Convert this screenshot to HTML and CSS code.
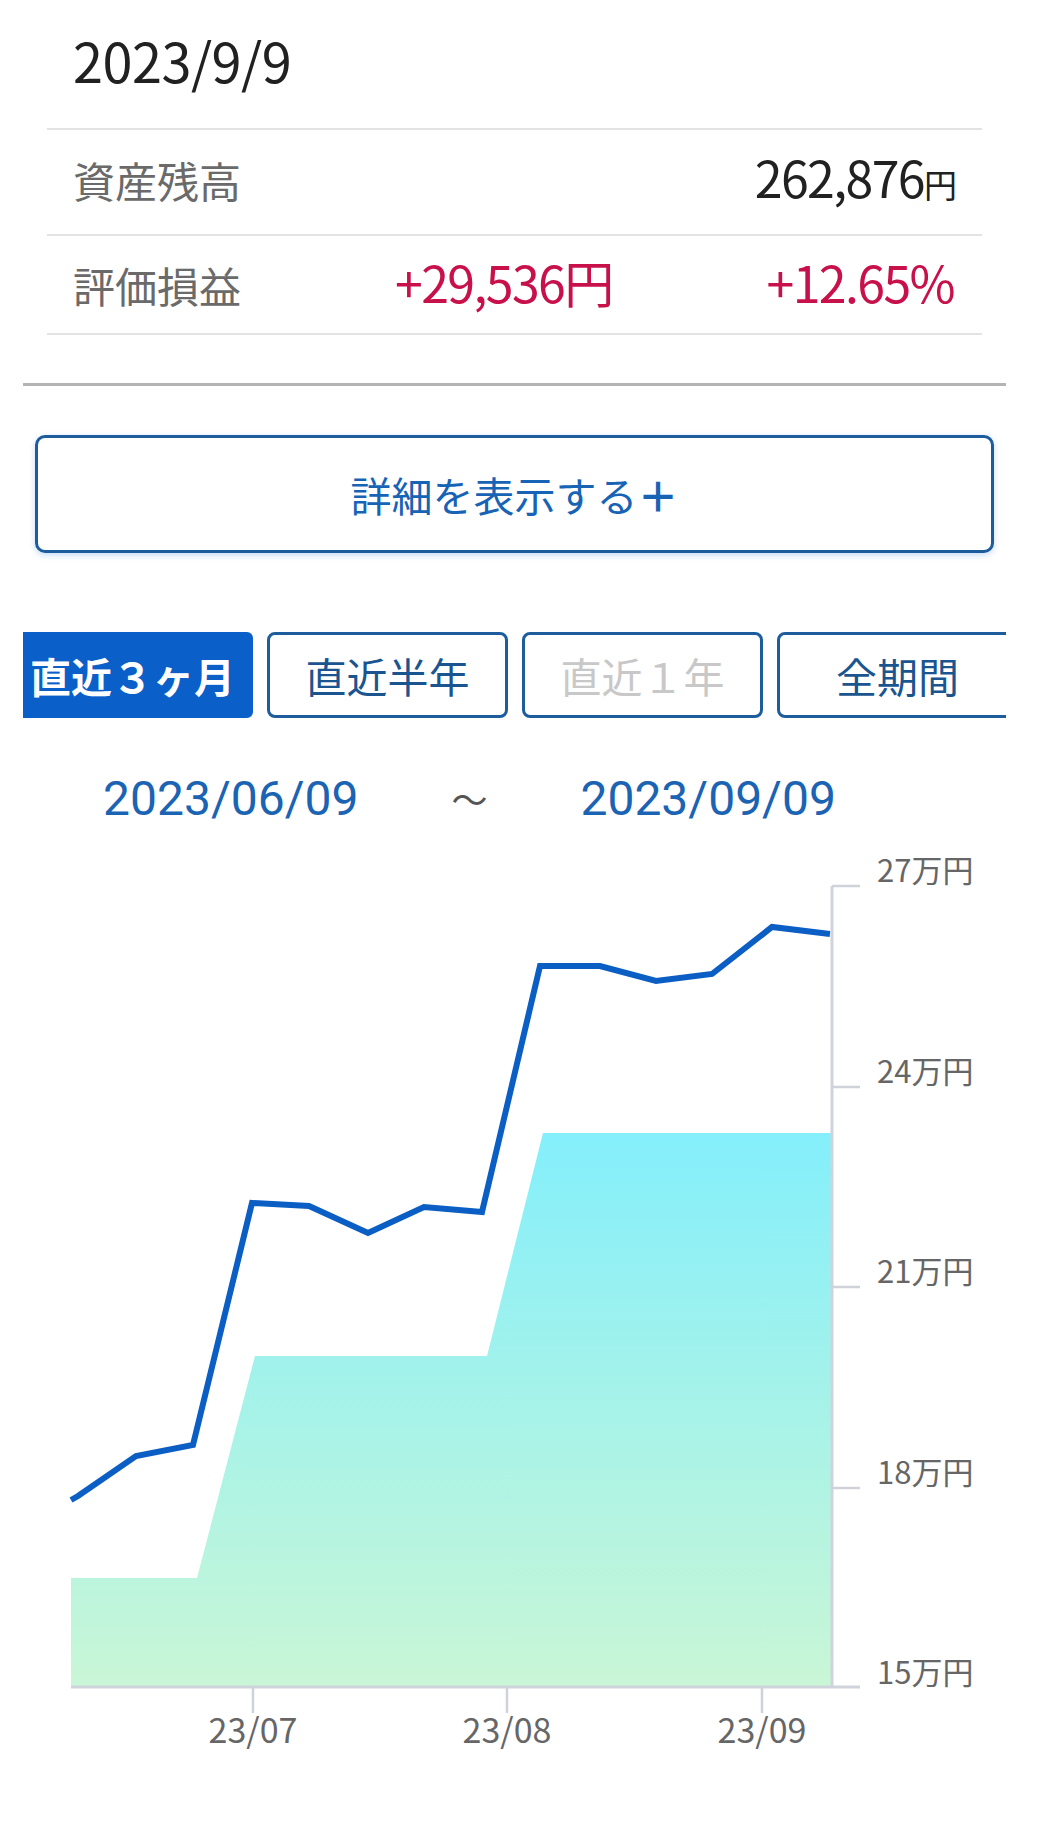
FILE: index.html
```html
<!DOCTYPE html>
<html lang="ja">
<head>
    <meta charset="UTF-8">
    <meta name="viewport" content="width=device-width, initial-scale=1.0">
    <title>資産推移</title>
    <link rel="stylesheet" href="styles.css">
</head>
<body>
    <div class="summary">
        <div class="summary-date">2023/9/9</div>
        <div class="summary-row balance">
            <span class="summary-label">資産残高</span>
            <span class="summary-value">262,876<span class="yen">円</span></span>
        </div>
        <div class="summary-row profit">
            <span class="summary-label">評価損益</span>
            <span class="summary-value plus">+29,536円</span>
            <span class="summary-value plus rate">+12.65%</span>
        </div>
    </div>
    <div class="divider"></div>

    <button class="detail-button">詳細を表示する<span class="detail-plus">＋</span></button>

    <div class="period-tabs">
        <div class="tabs-track">
            <button class="tab active">直近３ヶ月</button>
            <button class="tab">直近半年</button>
            <button class="tab disabled">直近１年</button>
            <button class="tab">全期間</button>
        </div>
    </div>

    <div class="range">
        <span class="range-date">2023/06/09</span>
        <span class="range-sep">〜</span>
        <span class="range-date">2023/09/09</span>
    </div>

    <div class="chart">
        <svg width="1039" height="920" viewBox="0 840 1039 920">
            <defs>
                <linearGradient id="principal" gradientUnits="userSpaceOnUse" x1="0" y1="1133" x2="0" y2="1687">
                    <stop offset="0" stop-color="#84effb"/>
                    <stop offset="1" stop-color="#c9f6d6"/>
                </linearGradient>
            </defs>
            <path d="M71 1687 L71 1578 L197 1578 L255 1356 L487 1356 L543 1133 L832 1133 L832 1687 Z" fill="url(#principal)"/>
            <polyline class="asset-line" points="71,1500 78,1496 136,1456 193,1445 252,1203 309,1206 368,1233 424,1207 482,1212 540,966 600,966 656,981 712,974 772,927 830,934"/>

            <line class="axis" x1="832" y1="886" x2="832" y2="1687"/>
            <line class="axis" x1="71" y1="1687" x2="860" y2="1687"/>
            <line class="tick" x1="832" y1="886" x2="860" y2="886"/>
            <line class="tick" x1="832" y1="1087" x2="860" y2="1087"/>
            <line class="tick" x1="832" y1="1287" x2="860" y2="1287"/>
            <line class="tick" x1="832" y1="1488" x2="860" y2="1488"/>
            <line class="tick" x1="253" y1="1687" x2="253" y2="1713"/>
            <line class="tick" x1="507" y1="1687" x2="507" y2="1713"/>
            <line class="tick" x1="762" y1="1687" x2="762" y2="1713"/>

            <text class="y-label" x="877" y="882">27万円</text>
            <text class="y-label" x="877" y="1083">24万円</text>
            <text class="y-label" x="877" y="1283">21万円</text>
            <text class="y-label" x="877" y="1484">18万円</text>
            <text class="y-label" x="877" y="1684">15万円</text>

            <text class="x-label" x="253" y="1743">23/07</text>
            <text class="x-label" x="507" y="1743">23/08</text>
            <text class="x-label" x="762" y="1743">23/09</text>
        </svg>
    </div>
</body>
</html>
```

FILE: styles.css
```css
:root {
    --text-main: #212121;
    --text-sub: #6a6a6a;
    --plus-color: #c8104b;
    --blue-dark: #1d5d9e;
    --blue-text: #1763b5;
    --blue-active: #0a5fc9;
    --line-color: #e3e3e3;
}

body {
    margin: 0;
    background-color: #fff;
    color: var(--text-main);
    font-family: "Noto Sans CJK JP", sans-serif;
    width: 1039px;
    min-height: 1844px;
}

.summary {
    margin: 0 57px 0 47px;
}
.summary-date {
    padding: 21px 0 29px 26px;
    font-size: 54px;
    line-height: 78px;
    letter-spacing: -0.5px;
}
.summary-row {
    display: flex;
    align-items: baseline;
    box-sizing: border-box;
    padding: 0 25px 0 26px;
    border-top: 2px solid var(--line-color);
}
.summary-row.balance {
    height: 106px;
    padding-top: 10px;
    justify-content: space-between;
}
.summary-row.profit {
    display: grid;
    grid-template-columns: 322px auto 1fr;
    height: 101px;
    padding-top: 9px;
    border-bottom: 2px solid var(--line-color);
}
.summary-label {
    font-size: 42px;
    color: var(--text-sub);
}
.summary-value {
    font-size: 50px;
    letter-spacing: -1.6px;
}
.summary-value .yen {
    font-size: 33px;
    letter-spacing: 0;
}
.summary-value.plus {
    color: var(--plus-color);
}
.summary-value.rate {
    text-align: right;
    margin-right: 3px;
}
.divider {
    margin: 48px 33px 0 23px;
    height: 3px;
    background-color: #b4b4b4;
}

.detail-button {
    display: block;
    box-sizing: border-box;
    width: 959px;
    height: 118px;
    margin: 49px 0 0 35px;
    padding: 0;
    background-color: #fff;
    border: 3px solid var(--blue-dark);
    border-radius: 10px;
    box-shadow: 0 2px 6px rgba(20, 110, 220, 0.25);
    color: var(--blue-text);
    font-family: "Noto Sans CJK JP", sans-serif;
    font-size: 41px;
}
.detail-plus {
    font-weight: bold;
}

.period-tabs {
    width: 983px;
    margin: 79px 0 0 23px;
    overflow: hidden;
}
.tabs-track {
    display: flex;
    gap: 14px;
    margin-left: -11px;
}
.tab {
    flex: 0 0 241px;
    box-sizing: border-box;
    height: 86px;
    padding: 0;
    background-color: #fff;
    border: 3px solid var(--blue-dark);
    border-radius: 8px;
    color: #1a5590;
    font-family: "Noto Sans CJK JP", sans-serif;
    font-size: 41px;
    white-space: nowrap;
}
.tab.active {
    background-color: var(--blue-active);
    border-color: var(--blue-active);
    border-radius: 6px;
    color: #fff;
    font-weight: bold;
}
.tab.disabled {
    color: #c8c8c8;
}

.range {
    display: flex;
    align-items: center;
    gap: 93px;
    margin-top: 53px;
    padding-left: 103px;
    height: 54px;
}
.range-date {
    font-family: Roboto, sans-serif;
    font-size: 48px;
    color: #1b63b3;
}
.range-sep {
    font-size: 36px;
    color: #555;
}

.chart {
    margin-top: 15px;
}
.chart svg {
    display: block;
}
.asset-line {
    fill: none;
    stroke: #0b5ec3;
    stroke-width: 6;
    stroke-linejoin: miter;
}
.axis {
    stroke: #cfd4dc;
    stroke-width: 3;
}
.tick {
    stroke: #cfd2d8;
    stroke-width: 2.5;
}
.y-label {
    font-family: "Noto Sans CJK JP", sans-serif;
    font-size: 31px;
    fill: #666;
}
.x-label {
    font-family: "Noto Sans CJK JP", sans-serif;
    font-size: 34px;
    fill: #666;
    text-anchor: middle;
}
```
